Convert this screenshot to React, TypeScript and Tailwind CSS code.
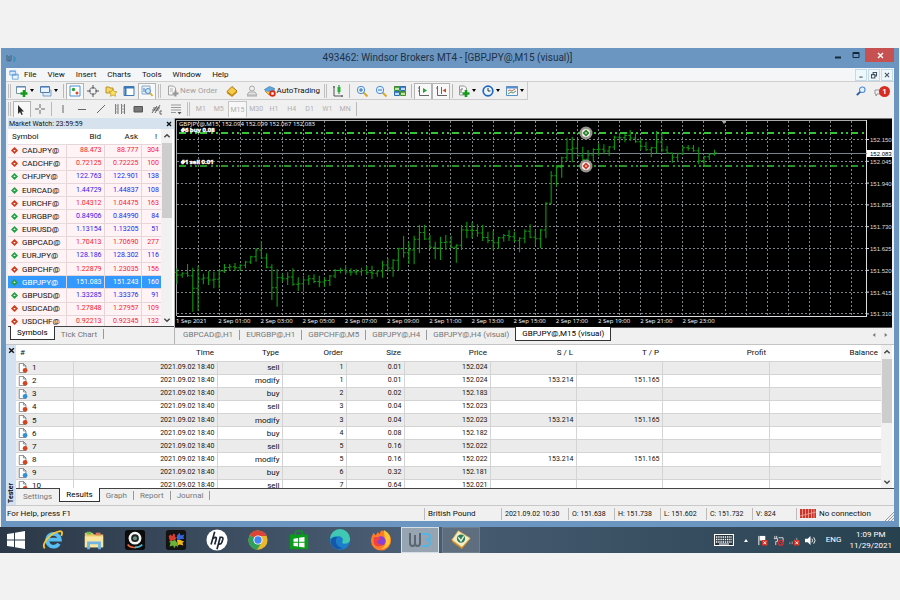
import type { ReactNode } from 'react'

interface Quote {
  symbol: string
  bid: string
  ask: string
  spread: number
  up: boolean
}

interface Order {
  id: number
  type: 'sell' | 'buy' | 'modify'
  order: number
  size: string
  price: string
  sl?: string
  tp?: string
}

const QUOTES: Quote[] = [
  { symbol: 'CADJPY@', bid: '88.473', ask: '88.777', spread: 304, up: false },
  { symbol: 'CADCHF@', bid: '0.72125', ask: '0.72225', spread: 100, up: false },
  { symbol: 'CHFJPY@', bid: '122.763', ask: '122.901', spread: 138, up: true },
  { symbol: 'EURCAD@', bid: '1.44729', ask: '1.44837', spread: 108, up: true },
  { symbol: 'EURCHF@', bid: '1.04312', ask: '1.04475', spread: 163, up: false },
  { symbol: 'EURGBP@', bid: '0.84906', ask: '0.84990', spread: 84, up: true },
  { symbol: 'EURUSD@', bid: '1.13154', ask: '1.13205', spread: 51, up: true },
  { symbol: 'GBPCAD@', bid: '1.70413', ask: '1.70690', spread: 277, up: false },
  { symbol: 'EURJPY@', bid: '128.186', ask: '128.302', spread: 116, up: true },
  { symbol: 'GBPCHF@', bid: '1.22879', ask: '1.23035', spread: 156, up: false },
  { symbol: 'GBPJPY@', bid: '151.083', ask: '151.243', spread: 160, up: true },
  { symbol: 'GBPUSD@', bid: '1.33285', ask: '1.33376', spread: 91, up: true },
  { symbol: 'USDCAD@', bid: '1.27848', ask: '1.27957', spread: 109, up: false },
  { symbol: 'USDCHF@', bid: '0.92213', ask: '0.92345', spread: 132, up: false },
]

const ORDERS: Order[] = [
  { id: 1, type: 'sell', order: 1, size: '0.01', price: '152.024' },
  { id: 2, type: 'modify', order: 1, size: '0.01', price: '152.024', sl: '153.214', tp: '151.165' },
  { id: 3, type: 'buy', order: 2, size: '0.02', price: '152.183' },
  { id: 4, type: 'sell', order: 3, size: '0.04', price: '152.023' },
  { id: 5, type: 'modify', order: 3, size: '0.04', price: '152.023', sl: '153.214', tp: '151.165' },
  { id: 6, type: 'buy', order: 4, size: '0.08', price: '152.182' },
  { id: 7, type: 'sell', order: 5, size: '0.16', price: '152.022' },
  { id: 8, type: 'modify', order: 5, size: '0.16', price: '152.022', sl: '153.214', tp: '151.165' },
  { id: 9, type: 'buy', order: 6, size: '0.32', price: '152.181' },
  { id: 10, type: 'sell', order: 7, size: '0.64', price: '152.021' },
]

// high / low of every bar, three units to a pixel
const BARS: [number, number][] = [
  [460, 507], [472, 488], [447, 485], [458, 590], [452, 587], [476, 508], [468, 510], [470, 520],
  [465, 520], [447, 474], [447, 468], [444, 467], [448, 468], [438, 460], [422, 447], [400, 440],
  [378, 432], [415, 460], [448, 555], [462, 575], [476, 500], [472, 510], [460, 512], [487, 528],
  [482, 530], [480, 510], [478, 505], [482, 517], [487, 515], [480, 513], [462, 490], [458, 475],
  [450, 480], [460, 482], [462, 480], [458, 482], [453, 480], [452, 492], [465, 485], [437, 488],
  [430, 470], [433, 485], [398, 465], [363, 428], [380, 447], [362, 448], [330, 415], [330, 375],
  [360, 400], [380, 433], [365, 435], [360, 405], [362, 400], [388, 443], [330, 405], [320, 370],
  [322, 370], [328, 365], [330, 378], [350, 385], [348, 405], [365, 402], [357, 380], [345, 378],
  [350, 380], [367, 412], [343, 385], [328, 370], [345, 390], [342, 400], [262, 370], [168, 268],
  [150, 215], [125, 188], [68, 138], [66, 142], [75, 125], [95, 150], [105, 160], [100, 140],
  [85, 122], [88, 118], [93, 123], [62, 105], [55, 78], [55, 82], [45, 78], [55, 83],
  [72, 105], [80, 107], [95, 127], [48, 115], [50, 112], [93, 117], [113, 143], [113, 140],
  [92, 120], [90, 107], [90, 110], [97, 148], [122, 152], [115, 135], [104, 122],
]

const PRICES = ['152.150', '152.045', '151.940', '151.835', '151.730', '151.625', '151.520', '151.415', '151.310']
const TIMES = [
  '1 Sep 2021', '2 Sep 01:00', '2 Sep 03:00', '2 Sep 05:00', '2 Sep 07:00', '2 Sep 09:00', '2 Sep 11:00',
  '2 Sep 13:00', '2 Sep 15:00', '2 Sep 17:00', '2 Sep 19:00', '2 Sep 21:00', '2 Sep 23:00',
]

const clamp = (v: number, lo: number, hi: number) => Math.min(hi, Math.max(lo, v))

function barsPath() {
  let d = ''
  let open = BARS[0][0] + 12
  BARS.forEach(([high, low], i) => {
    const next = BARS[i + 1] ?? [high, low]
    const close = clamp((next[0] + next[1]) / 2, high + 3, low - 3)
    const x = 2 + i * 5.27
    const y = (v: number) => (v / 3 - 3).toFixed(1)
    d += `M${x} ${y(high)}V${y(low)}`
    d += `M${x - 2} ${y(clamp(open, high, low))}h2M${x} ${y(close)}h2`
    open = close
  })
  return d
}

function PriceChart() {
  return (
    <svg
      className="block h-[209px] w-full bg-black"
      viewBox="0 0 719 209"
      preserveAspectRatio="xMinYMin slice"
      role="img"
      aria-label="GBPJPY@ M15 bar chart"
    >
      <g stroke="#7f878c" strokeWidth="1" strokeDasharray="2 2" shapeRendering="crispEdges">
        {Array.from({ length: 32 }, (_, i) => (
          <line key={i} x1={23 + i * 21.08} x2={23 + i * 21.08} y1="3" y2="198" />
        ))}
        {PRICES.map((p, i) => (
          <line key={p} x1="2" x2="692" y1={21.5 + i * 21.8} y2={21.5 + i * 21.8} />
        ))}
      </g>
      <path d="M0 .5H719" stroke="#777" />
      <path d="M2 2.5H692M1.5 2V198" stroke="#aaa" fill="none" />
      <path d="M691.5 2V199M2 198.5H692" stroke="#ddd" />
      <path d="M2 35.5H692" stroke="#72848c" />
      <path d={barsPath()} stroke="#0c9a0c" strokeWidth="1.1" fill="none" />
      <g stroke="#35c435" strokeDasharray="7 4 2 3 2 3">
        <line x1="4" x2="689" y1="15" y2="15" strokeWidth="2" />
        <line x1="4" x2="689" y1="48" y2="48" strokeWidth="1.5" />
      </g>
      <path d="M546 2h6l-3 4z" fill="#aaa" />
      {[15, 48].map((cy) => (
        <g key={cy}>
          <circle cx="411" cy={cy} r="5.3" fill="#f2f0ea" stroke="#96948c" strokeWidth="2.4" />
          <path d={`M411 ${cy - 3.500}l3.500 3.500-3.500 3.500-3.500-3.500z`} fill={cy === 15 ? '#27852b' : '#d2362b'} />
          <path d={`M411 ${cy - 1}l1 1-1 1-1-1z`} fill="#fff" />
        </g>
      ))}
      <g fill="#fff" fontFamily='"Open Sans", sans-serif' fontSize="6">
        <text x="4" y="8">GBPJPY@,M15&nbsp; 152.094 152.099 152.067 152.083</text>
        <g fontWeight="700" stroke="#fff" strokeWidth=".4">
          <text x="6" y="14">#6 buy 0.08</text>
          <text x="6" y="46">#1 sell 0.01</text>
        </g>
        {TIMES.map((t, i) => (
          <text key={t} x={1 + i * 42.2} y="205">{t}</text>
        ))}
      </g>
      <g fill="#ddd" fontFamily='"Liberation Sans", sans-serif' fontSize="6">
        {PRICES.map((p, i) => (
          <g key={p}>
            <path d={`M692 ${21.5 + i * 21.8}h2`} stroke="#ddd" />
            <text x="695" y={24 + i * 21.8}>{p}</text>
          </g>
        ))}
        <rect x="692" y="32" width="26" height="7" fill="#fff" />
        <text x="695" y="38" fill="#000">152.083</text>
      </g>
    </svg>
  )
}

function Icon({ children, size = 'size-3' }: { children: ReactNode; size?: string }) {
  return (
    <svg viewBox="0 0 12 12" className={`${size} shrink-0`} fill="none" aria-hidden="true">
      {children}
    </svg>
  )
}

function Plus() {
  return <path d="M8 5v7M4.5 8.5h7" stroke="#149b1c" strokeWidth="2.6" />
}

function Caret() {
  return (
    <svg viewBox="0 0 4 3" className="h-[3px] w-1 shrink-0 fill-black" aria-hidden="true">
      <path d="M0 0h4L2 3z" />
    </svg>
  )
}

interface ToolProps {
  label: string
  pressed?: boolean
  menu?: boolean
  width?: string
  children: ReactNode
}

function Tool({ label, pressed, menu, width = 'w-[18px]', children }: ToolProps) {
  return (
    <button
      type="button"
      aria-label={label}
      className={`flex h-4 items-center justify-center gap-[2px] ${width} ${
        pressed ? 'border border-b-0 border-[#b5b5b5] bg-[#f8f8f8]' : ''
      }`}
    >
      {children}
      {menu && <Caret />}
    </button>
  )
}

function Sep() {
  return <span className="mx-[2px] h-[14px] w-px shrink-0 bg-[#b8b8b8]" />
}

function Grip() {
  return <span className="mx-[2px] h-[14px] w-[3px] shrink-0 border-x border-[#c0c0c0]" />
}

function TitleBar() {
  return (
    <header className="flex h-5 items-start bg-[#6b96c1]">
      <div className="flex h-5 w-[60px] items-center">
        <Icon>
          <path d="M1 3v5q0 1 1 1t1-1V4M3 8q0 1 1 1t1-1V3" stroke="#44607c" />
          <path d="M7 5h2v4H7M7 7h2" stroke="#2f8fb5" />
        </Icon>
      </div>
      <h1 className="flex-1 text-center text-[10px] leading-5 text-[#1d3147]">
        493462: Windsor Brokers MT4 - [GBPJPY@,M15 (visual)]
      </h1>
      <div className="flex">
        <button type="button" aria-label="Minimize" className="flex h-[14px] w-[18px] items-center justify-center">
          <Icon><path d="M3 8.5h6" stroke="#16283c" strokeWidth="2" /></Icon>
        </button>
        <button type="button" aria-label="Maximize" className="flex h-[14px] w-[18px] items-center justify-center">
          <Icon><path d="M3 3.5h6v5H3zM3 4.5h6" stroke="#16283c" /></Icon>
        </button>
        <button type="button" aria-label="Close" className="flex h-[14px] w-[29px] items-center justify-center bg-[#c75050]">
          <Icon><path d="M4 4l5 5M9 4l-5 5" stroke="#fff" strokeWidth="1.4" /></Icon>
        </button>
      </div>
    </header>
  )
}

function MenuBar() {
  return (
    <nav className="flex h-[14px] items-center border-b border-[#cfcfcf] bg-[#f5f6f7] pr-px text-[8px] leading-3">
      <div className="w-[18px] pl-[3px]">
        <Icon size="size-[10px]">
          <path d="M1 1h7v5H1zM4 5h7v6H4z" fill="#eaf5ff" stroke="#5b9be0" />
          <path d="M1 2h7M4 6h7" stroke="#5b9be0" />
        </Icon>
      </div>
      <div className="flex flex-1 gap-[11px]">
        {['File', 'View', 'Insert', 'Charts', 'Tools', 'Window', 'Help'].map((m) => (
          <button key={m} type="button">{m}</button>
        ))}
      </div>
      <div className="flex gap-px">
        {[
          ['Minimize chart', 'M4 8.5h4'],
          ['Restore chart', 'M3 5.5h4v4H3zM5 5V3h4v4H7'],
          ['Close chart', 'M3.500 3.500l5 5M8.500 3.500l-5 5'],
        ].map(([label, d]) => (
          <button
            key={label}
            type="button"
            aria-label={label}
            className="flex h-3 w-3 items-center justify-center border border-[#c3dbe8] bg-[#eef7fb]"
          >
            <Icon size="size-[10px]"><path d={d} stroke="#425261" strokeWidth="1.3" /></Icon>
          </button>
        ))}
      </div>
    </nav>
  )
}

function StandardToolbar() {
  return (
    <div className="flex h-[18px] items-center justify-between pr-1">
      <div className="flex h-[18px] items-center border-r border-b border-[#cacaca]">
        <Grip />
        <Tool label="New chart" menu width="w-[24px]">
          <Icon>
            <path d="M.5 1.500h9v7h-9z" fill="#fff" stroke="#7793b0" />
            <path d="M.5 2h9" stroke="#4f7caf" />
            <Plus />
          </Icon>
        </Tool>
        <Tool label="Profiles" menu width="w-[24px]">
          <Icon>
            <path d="M3 5h8v6H3z" fill="#dcecff" stroke="#7f9fc4" />
            <path d="M.5 1.500h9v6h-9z" fill="#eaf3ff" stroke="#4f7caf" />
            <path d="M1 2.500h8" stroke="#88b0dd" />
          </Icon>
        </Tool>
        <Sep />
        <Tool label="Market Watch" pressed>
          <Icon>
            <path d="M1 1h10v10H1z" fill="#fff" stroke="#4d8fd2" />
            <circle cx="4.500" cy="4.500" r="1.700" fill="#2aa52e" />
            <circle cx="8" cy="8" r="1.500" fill="#d84a32" />
          </Icon>
        </Tool>
        <Tool label="Data Window">
          <Icon>
            <circle cx="6" cy="6" r="3.500" stroke="#777" />
            <path d="M6 0v4M6 8v4M0 6h4M8 6h4" stroke="#555" />
          </Icon>
        </Tool>
        <Tool label="Navigator">
          <Icon>
            <path d="M1 2h3l1 1h3v5H1z" fill="#f4d463" stroke="#bd9327" />
            <path d="M8 4l1.300 2.500 2.700.3-2 1.800.5 2.700L8 10l-2.500 1.300.5-2.700-2-1.800 2.700-.3z" fill="#fbe45c" stroke="#bd9327" strokeWidth=".7" />
          </Icon>
        </Tool>
        <Tool label="Terminal">
          <Icon>
            <path d="M1 1.500h10v9H1z" fill="#fff" stroke="#3d78b5" />
            <path d="M2.500 2v8M1 2.500h10" stroke="#3d78b5" strokeWidth="2" />
          </Icon>
        </Tool>
        <Tool label="Strategy Tester" pressed>
          <Icon>
            <path d="M1 1h8v8H1z" fill="#e9f2fb" stroke="#8aa7c6" />
            <path d="M3 7V3M5 8V4" stroke="#467cb8" />
            <circle cx="7" cy="6" r="2.500" fill="#cfe6fb" stroke="#568dc9" />
            <path d="M9 8l2.500 3" stroke="#d8a62a" strokeWidth="1.600" />
          </Icon>
        </Tool>
        <Grip />
        <button type="button" className="flex h-4 items-center gap-px px-1 text-[8px] text-[#a0a0a0]">
          <Icon>
            <path d="M1.500 1h5l2 2v7h-7z" fill="#f4f4f4" stroke="#a2a2a2" />
            <path d="M3 4h3M3 6h3" stroke="#b5b5b5" />
            <path d="M8.500 5.500v6M5.500 8.500h6" stroke="#959595" strokeWidth="2" />
          </Icon>
          New Order
        </button>
        <Tool label="MetaEditor" width="w-[20px]">
          <Icon>
            <path d="M1 6.500l5-5 5 4.500-5 4.500z" fill="#f7cb45" stroke="#a97411" />
            <path d="M1 7.500l5 3.500 5-4.500" stroke="#c68c15" strokeWidth="1.500" />
          </Icon>
        </Tool>
        <Tool label="Options" width="w-[20px]">
          <Icon>
            <circle cx="6" cy="3.500" r="2.500" stroke="#a8a8a8" fill="#eee" />
            <path d="M3 7l-2 3h10L9 7zM1 11h10" stroke="#a8a8a8" fill="#e6e6e6" />
          </Icon>
        </Tool>
        <button type="button" className="flex h-4 items-center gap-px px-[2px] text-[8px]">
          <Icon>
            <path d="M.500 4.500l5-3 5 2-1 4-5 2z" fill="#5fa7dd" stroke="#3b78b0" strokeWidth=".7" />
            <path d="M1 6l4 4 4-2" fill="#f1c84a" stroke="#c89222" />
            <circle cx="8.500" cy="8.500" r="3.200" fill="#d52c1e" />
            <path d="M7.300 7.300h2.400v2.400H7.300z" fill="#fff" />
          </Icon>
          AutoTrading
        </button>
        <Grip />
        <Tool label="Candlesticks">
          <Icon>
            <path d="M2 1v10h9M1 2h2M10 10v2" stroke="#555" />
            <path d="M7 0v9" stroke="#1d7d26" />
            <path d="M5.500 2h3v5h-3z" fill="#27ae35" />
          </Icon>
        </Tool>
        <Sep />
        <Tool label="Zoom in" width="w-[19px]">
          <Icon>
            <path d="M7.500 7.500l4 4" stroke="#d9a92c" strokeWidth="2" />
            <circle cx="5" cy="5" r="3.700" fill="#e2f1ff" stroke="#4c8fd4" />
            <path d="M3 5h4M5 3v4" stroke="#2c6fb5" />
          </Icon>
        </Tool>
        <Tool label="Zoom out" width="w-[19px]">
          <Icon>
            <path d="M7.500 7.500l4 4" stroke="#d9a92c" strokeWidth="2" />
            <circle cx="5" cy="5" r="3.700" fill="#e2f1ff" stroke="#4c8fd4" />
            <path d="M3 5h4" stroke="#2c6fb5" />
          </Icon>
        </Tool>
        <Tool label="Tile windows" width="w-[19px]">
          <Icon>
            <path d="M.5 1.500h5v4h-5zM6.500 6.500h5v4h-5z" fill="#bfe6a3" stroke="#3c8e2c" />
            <path d="M6.500 1.500h5v4h-5zM.5 6.500h5v4h-5z" fill="#bcdcff" stroke="#2d6db8" />
            <path d="M0 2h6M6 7h6" stroke="#3c8e2c" strokeWidth="1.500" />
            <path d="M6 2h6M0 7h6" stroke="#2d6db8" strokeWidth="1.500" />
          </Icon>
        </Tool>
        <Sep />
        <Tool label="Auto scroll" pressed>
          <Icon>
            <path d="M2.500 1v9.500H12M1 3h1M1 6h1" stroke="#666" />
            <path d="M6 3l4 2.500L6 8z" fill="#24a231" />
          </Icon>
        </Tool>
        <Tool label="Chart shift" pressed>
          <Icon>
            <path d="M2.500 1v9.500H12M1 3h1M6.500 2v7" stroke="#666" />
            <path d="M11 3.500L7.500 5.500 11 7.500z" fill="#c84a22" />
          </Icon>
        </Tool>
        <Sep />
        <Tool label="Indicators" menu width="w-[24px]">
          <Icon>
            <path d="M1.500 1h5l2 2v7h-7z" fill="#f6f6f6" stroke="#999" />
            <path d="M3 8V4h2" stroke="#777" />
            <Plus />
          </Icon>
        </Tool>
        <Tool label="Periods" menu width="w-[24px]">
          <Icon>
            <circle cx="6" cy="6" r="4.800" fill="#eaf5ff" stroke="#1e68bd" strokeWidth="1.700" />
            <path d="M6 3v3h2.500" stroke="#333" />
          </Icon>
        </Tool>
        <Tool label="Templates" menu width="w-[24px]">
          <Icon>
            <path d="M.5 1.500h11v9H.5z" fill="#f2f8ff" stroke="#5b8fc7" />
            <path d="M.5 2.500h11" stroke="#5b8fc7" strokeWidth="2" />
            <path d="M2 6l2-1 2 1 3-2" stroke="#c86b55" />
            <path d="M2 9l3-2 2 1 3-2" stroke="#4f9a57" />
          </Icon>
        </Tool>
      </div>
      <div className="flex items-center gap-2">
        <button type="button" aria-label="Search">
          <Icon size="size-[10px]">
            <circle cx="7.500" cy="4.500" r="3.300" fill="#e7f1fb" stroke="#4c8cd0" strokeWidth="1.300" />
            <path d="M5 7l-4 4" stroke="#2a56a8" strokeWidth="2.200" />
          </Icon>
        </button>
        <button type="button" aria-label="Notifications, 1 new" className="flex items-center">
          <svg viewBox="0 0 6 8" className="mt-1 -mr-px h-2 w-[6px]" fill="none" aria-hidden="true">
            <path d="M1 1h5v4H3L2 7V5H1z" fill="#eee" stroke="#999" />
          </svg>
          <span className="size-[11px] rounded-full bg-[#d82c1f] text-center text-[8px] font-bold leading-[11px] text-white">1</span>
        </button>
      </div>
    </div>
  )
}

function DrawingToolbar() {
  const frames = ['M1', 'M5', 'M15', 'M30', 'H1', 'H4', 'D1', 'W1', 'MN']
  return (
    <div className="flex h-[18px] items-center">
      <Grip />
      <Tool label="Cursor" pressed>
        <Icon><path d="M2 1v9l2-2 1.500 3 1.300-.6L5.400 7.500H8z" fill="#2d2d2d" /></Icon>
      </Tool>
      <Tool label="Crosshair">
        <Icon><path d="M6 1v4M6 7v4M1 6h4M7 6h4" stroke="#666" /></Icon>
      </Tool>
      <Sep />
      <div className="flex w-[131px] *:flex-1">
        <Tool label="Vertical line"><Icon><path d="M6 2v8" stroke="#666" /></Icon></Tool>
        <Tool label="Horizontal line"><Icon><path d="M2 6.500h8" stroke="#666" /></Icon></Tool>
        <Tool label="Trendline"><Icon><path d="M2 10l8-8" stroke="#666" /></Icon></Tool>
        <Tool label="Cycle lines">
          <Icon><path d="M1.500 1v10M4 1v10M7.500 1v10M10.500 1v10" stroke="#777" /><path d="M1 3h3M1 6h3M1 9h3M7 3h3M7 6h3M7 9h3" stroke="#999" /></Icon>
        </Tool>
        <Tool label="Rectangle"><Icon><path d="M2 3.500h8.500v5.500H2z" fill="#777" stroke="#555" /></Icon></Tool>
        <Tool label="Channel">
          <Icon><path d="M1 10l5-7M4 10l5-8M2 5h7M1 7h7M9 8h2M9 11h2M9 8v3" stroke="#555" strokeWidth=".9" /></Icon>
        </Tool>
        <Tool label="Fibonacci">
          <Icon><path d="M1 2h10M1 4.500h10M1 7h10M1 9.500h5" stroke="#999" /><path d="M7.500 9h4l-2 2.500z" fill="#555" /></Icon>
        </Tool>
      </div>
      <Grip />
      <div className="flex w-[162px]">
        {frames.map((f) => (
          <button
            key={f}
            type="button"
            className={`h-4 flex-1 text-center text-[7px] leading-4 text-[#b0b0b0] ${
              f === 'M15' ? 'border border-b-0 border-[#c4c4c4] bg-[#f7f7f7]' : ''
            }`}
          >
            {f}
          </button>
        ))}
      </div>
      <Sep />
    </div>
  )
}

function Scrollbar({ thumb }: { thumb: string }) {
  return (
    <div className="flex w-[11px] shrink-0 flex-col items-center bg-[#f1f1f1]">
      <button type="button" aria-label="Scroll up" className="flex h-[14px] items-center">
        <Icon size="size-[8px]"><path d="M2 8l4-4 4 4" stroke="#444" strokeWidth="2" /></Icon>
      </button>
      <span className={`w-[10px] bg-[#cdcdcd] ${thumb}`} />
      <button type="button" aria-label="Scroll down" className="mt-auto flex h-3 items-center">
        <Icon size="size-[8px]"><path d="M2 4l4 4 4-4" stroke="#444" strokeWidth="2" /></Icon>
      </button>
    </div>
  )
}

function MarketWatch() {
  return (
    <section className="flex w-[167px] shrink-0 flex-col border-r border-[#b5b5b5]">
      <div className="flex h-[11px] items-center justify-between bg-[#d6e2ee] px-px leading-[10px]">
        <h2 className="text-[7px]">Market Watch: 23:59:59</h2>
        <button type="button" aria-label="Close Market Watch">
          <Icon size="size-[8px]"><path d="M3 3l6 6M9 3L3 9" stroke="#111" strokeWidth="2" /></Icon>
        </button>
      </div>
      <div className="flex h-[198px] overflow-hidden border-b border-[#444] bg-white">
        <div className="flex-1 overflow-hidden">
          <table className="h-[200px] w-full table-fixed border-collapse text-right text-[8px] leading-[11px]">
            <colgroup>
              <col />
              <col className="w-[38px]" />
              <col className="w-[37px]" />
              <col className="w-[20px]" />
            </colgroup>
            <thead>
              <tr className="h-[15px]">
                <th className="pl-1 text-left font-normal">Symbol</th>
                <th className="pr-[3px] font-normal">Bid</th>
                <th className="pr-[3px] font-normal">Ask</th>
                <th className="pr-1 font-normal">!</th>
              </tr>
            </thead>
            <tbody>
              {QUOTES.map((q) => {
                const active = q.symbol === 'GBPJPY@'
                const tone = active ? 'text-white' : q.up ? 'text-[#2a1df0]' : 'text-[#f5222d]'
                return (
                  <tr key={q.symbol} className={active ? 'bg-[#3399ff] text-white' : 'bg-[#fff3f5]'}>
                    <td className="border-y border-[#e6dcde] py-0">
                      <span className="flex items-center gap-1 pl-[3px]">
                        <Icon size="size-[7px]">
                          <path d="M6 0l6 6-6 6-6-6z" fill={q.up ? '#1fa344' : '#cf3b1b'} />
                          <path d={q.up ? 'M4 7l2-3 2 3z' : 'M4 5l2 3 2-3z'} fill="#fff" />
                        </Icon>
                        {q.symbol}
                      </span>
                    </td>
                    {[q.bid, q.ask, q.spread].map((v, i) => (
                      <td key={i} className={`border border-r-0 border-[#e6d6da] py-0 pr-[2px] text-[7px] ${tone}`}>{v}</td>
                    ))}
                  </tr>
                )
              })}
            </tbody>
          </table>
        </div>
        <Scrollbar thumb="h-[75px]" />
        <span className="w-[2px]" />
      </div>
      <div className="flex h-[14px] pl-[2px] text-[8px] leading-3 text-[#777]">
        <button type="button" className="-mt-px mb-px border border-t-0 border-[#333] bg-white px-[6px] text-black">Symbols</button>
        <button type="button" className="my-[2px] border-r border-[#999] px-[6px] leading-[9px]">Tick Chart</button>
      </div>
    </section>
  )
}

function ChartArea() {
  return (
    <section className="min-w-0 flex-1 pr-px">
      <PriceChart />
      <div className="flex h-[17px] items-start border-t border-[#555] pl-[2px] text-[8px] leading-3 text-[#777]">
        {['GBPCAD@,H1', 'EURGBP@,H1', 'GBPCHF@,M5', 'GBPJPY@,H4'].map((t) => (
          <button key={t} type="button" className="my-[2px] border-r border-[#999] px-[6px] leading-[10px]">{t}</button>
        ))}
        <button type="button" className="my-[2px] px-[6px] leading-[10px]">GBPJPY@,H4 (visual)</button>
        <button type="button" className="-mt-px border border-t-0 border-[#333] bg-white px-[6px] pt-px text-black">
          GBPJPY@,M15 (visual)
        </button>
        <div className="ml-auto flex gap-1 pt-[3px] pr-[2px]">
          <button type="button" aria-label="Previous tab"><Icon size="size-[8px]"><path d="M8 3v6L4 6z" fill="#777" /></Icon></button>
          <button type="button" aria-label="Next tab"><Icon size="size-[8px]"><path d="M4 3v6l4-3z" fill="#777" /></Icon></button>
        </div>
      </div>
    </section>
  )
}

const CELL = 'border-r border-b border-[#d4d4d4] py-0 pr-[2px]'

function Tester() {
  return (
    <section className="flex border-t border-[#c4c4c4]">
      <div className="flex w-[10px] shrink-0 flex-col items-center justify-between bg-[#d3e1f1] py-[2px]">
        <button type="button" aria-label="Close Tester">
          <Icon size="size-[7px]"><path d="M2 2l8 8M10 2l-8 8" stroke="#111" strokeWidth="2.400" /></Icon>
        </button>
        <h2 className="rotate-180 text-[7px] font-bold leading-[9px] [writing-mode:vertical-rl]">Tester</h2>
      </div>
      <div className="min-w-0 flex-1">
        <div className="flex h-[144px] overflow-hidden border-b border-[#444] bg-white">
          <div className="min-w-0 flex-1">
            <table className="h-[148px] w-full table-fixed border-collapse text-right text-[7px] leading-[11px]">
              <colgroup>
                <col className="w-[57px]" />
                <col className="w-[144px]" />
                <col className="w-[65px]" />
                <col className="w-[64px]" />
                <col className="w-[58px]" />
                <col className="w-[86px]" />
                <col className="w-[86px]" />
                <col className="w-[86px]" />
                <col className="w-[107px]" />
                <col />
              </colgroup>
              <thead>
                <tr className="h-4 text-[8px]">
                  <th className="border-b border-[#d4d4d4] pl-1 text-left font-normal">#</th>
                  {['Time', 'Type', 'Order', 'Size', 'Price', 'S / L', 'T / P', 'Profit', 'Balance'].map((h) => (
                    <th key={h} className="border-b border-[#d4d4d4] pr-[3px] font-normal">{h}</th>
                  ))}
                </tr>
              </thead>
              <tbody>
                {ORDERS.map((o) => (
                  <tr key={o.id} className="odd:bg-[#ebebeb]">
                    <td className={CELL}>
                      <span className="flex items-center gap-1 pl-[2px] text-[8px]">
                        <Icon size="size-[10px]">
                          <path d="M1.500 .500h5l3 3v8h-8z" fill="#fff" stroke="#777" />
                          <path d="M6.500 .500v3h3" stroke="#777" />
                          <circle cx="8.500" cy="8.800" r="2.800" fill={o.type === 'buy' ? '#2f8fd8' : '#d5431e'} />
                        </Icon>
                        {o.id}
                      </span>
                    </td>
                    <td className={CELL}>2021.09.02 18:40</td>
                    <td className={`${CELL} text-[8px]`}>{o.type}</td>
                    <td className={CELL}>{o.order}</td>
                    <td className={CELL}>{o.size}</td>
                    <td className={CELL}>{o.price}</td>
                    <td className={CELL}>{o.sl}</td>
                    <td className={CELL}>{o.tp}</td>
                    <td className={CELL} />
                    <td className="border-b border-[#d4d4d4]" />
                  </tr>
                ))}
              </tbody>
            </table>
          </div>
          <Scrollbar thumb="h-16" />
          <span className="w-[2px]" />
        </div>
        <div className="flex h-[16px] text-[8px] leading-3 text-[#777]">
          <button type="button" className="px-[7px]">Settings</button>
          <button type="button" className="-mt-px mb-[3px] border border-t-0 border-[#333] bg-white px-[6px] text-black">Results</button>
          {['Graph', 'Report', 'Journal'].map((t) => (
            <button key={t} type="button" className="mt-[2px] mb-[5px] border-r border-[#999] px-[6px] leading-[9px]">{t}</button>
          ))}
        </div>
      </div>
    </section>
  )
}

const FIELD = 'border-l border-[#bbb] pl-[3px]'

function StatusBar() {
  return (
    <footer className="flex h-4 items-center border-t border-[#c8c8c8] text-[8px] leading-3">
      <span className="flex-1 pl-px">For Help, press F1</span>
      <span className={`${FIELD} w-[77px]`}>British Pound</span>
      <span className={`${FIELD} w-[67px] text-[7px]`}>2021.09.02 10:30</span>
      <span className={`${FIELD} w-[46px] text-[7px]`}>O: 151.638</span>
      <span className={`${FIELD} w-[46px] text-[7px]`}>H: 151.738</span>
      <span className={`${FIELD} w-[46px] text-[7px]`}>L: 151.602</span>
      <span className={`${FIELD} w-[46px] text-[7px]`}>C: 151.732</span>
      <span className={`${FIELD} w-[44px] text-[7px]`}>V: 824</span>
      <span className={`${FIELD} flex w-[88px] items-center gap-[3px]`}>
        <svg viewBox="0 0 16 9" className="h-[9px] w-4" aria-hidden="true">
          <path d="M0 0h16v9H0z" fill="#c9352b" />
          <path d="M2.500 0v9M5.500 0v9M8.500 0v9M11.500 0v9M14 0v9M0 7l16-4" stroke="#f3b5ae" strokeWidth=".7" />
        </svg>
        No connection
      </span>
      <svg viewBox="0 0 10 10" className="size-[10px] self-end" stroke="#999" aria-hidden="true">
        <path d="M1 10l9-9M4 10l6-6M7 10l3-3" />
      </svg>
    </footer>
  )
}

function TaskIcon({ label, children }: { label: string; children: ReactNode }) {
  return (
    <button type="button" aria-label={label} className="flex w-[41px] items-center justify-center">
      <svg viewBox="0 0 24 24" className="size-[22px]" fill="none" aria-hidden="true">{children}</svg>
    </button>
  )
}

function Taskbar() {
  return (
    <div className="flex h-[26px] items-stretch bg-linear-to-r from-[#2b3847] via-[#4a5e75] via-45% to-[#27414f] text-white">
      <button type="button" aria-label="Start" className="flex w-8 items-center justify-center">
        <svg viewBox="0 0 18 18" className="size-[18px] fill-white" aria-hidden="true">
          <path d="M0 3l7-1v6.500H0zM8 1.800L18 0v8.500H8zM0 9.500h7V16l-7-1zM8 9.500h10V18L8 16.200z" />
        </svg>
      </button>
      <TaskIcon label="Internet Explorer">
        <path d="M18.500 16a7 7 0 1 1 1-4.500H7" stroke="#58bdf0" strokeWidth="4" />
        <path d="M3 21C-1 17 9 4 19 2.500c4-.5 3 3 2 5" stroke="#f3c736" strokeWidth="2" />
      </TaskIcon>
      <TaskIcon label="File Explorer">
        <path d="M2 4h8l2 2h10v14H2z" fill="#e9c766" />
        <path d="M4 3h5v3H4z" fill="#6bbf59" /><path d="M14 4h5v3h-5z" fill="#e07a5a" />
        <path d="M2 8h20v12H2z" fill="#f8e6a0" />
        <path d="M6 22v-7h12v7" stroke="#6fb4e3" strokeWidth="3" />
      </TaskIcon>
      <TaskIcon label="Camera">
        <rect x="1" y="1" width="22" height="22" rx="3" fill="#0c0c0c" />
        <circle cx="12" cy="10" r="7" fill="#f4f4f4" />
        <circle cx="12" cy="10" r="4.200" fill="#222" />
        <circle cx="12" cy="10" r="2.200" fill="#5f927c" />
        <path d="M4 17q3 4 9 3" stroke="#e3643a" strokeWidth="1.800" />
        <path d="M12 20q5 0 8-3" stroke="#4cb6d6" strokeWidth="1.800" />
      </TaskIcon>
      <TaskIcon label="Paint studio">
        <rect x="1" y="1" width="22" height="22" rx="3" fill="#131313" />
        <path d="M4 8l2-2 2 2 1-3 2 1v3l2 0-2 3-3 0-1 3-2-3z" fill="#d83b2c" />
        <path d="M13 7l3-3 1 3 4-1-1 3 1 2-4 0-3 2-1-3z" fill="#3366d6" />
        <path d="M13 12l4 0 4 2-2 1 1 3-4-1-2 1z" fill="#efb520" />
        <path d="M11 12l3 4 0 4-2-2-2 3-1-3-4 1 1-4-2-1z" fill="#6bb23a" />
      </TaskIcon>
      <TaskIcon label="HP">
        <circle cx="12" cy="12" r="11.500" fill="#fff" />
        <path d="M9.500 3L5.500 17M7.800 10q4-2 3.500.7L9.500 17M15.500 9L12 22M14.500 9h2.500q2 0 1.300 2.500l-1 3q-.6 2-2.300 2h-1.500" stroke="#1c2430" strokeWidth="1.800" />
      </TaskIcon>
      <TaskIcon label="Chrome">
        <circle cx="12" cy="12" r="10.500" fill="#e8b92e" />
        <path d="M12 12L2.900 6.800A10.500 10.500 0 0 1 21.500 7.500H12z" fill="#db4437" />
        <path d="M12 12L2.900 6.800A10.500 10.500 0 0 0 11 22.500l5-8z" fill="#2fa05a" />
        <circle cx="12" cy="12" r="5" fill="#fff" />
        <circle cx="12" cy="12" r="4" fill="#4285f4" />
      </TaskIcon>
      <TaskIcon label="Store">
        <path d="M8 7V4q0-2 4-2t4 2v3" stroke="#0a9b1b" strokeWidth="1.500" />
        <path d="M2 6h20v16H2z" fill="#0a9b1b" />
        <path d="M6 10.500l5-.7V14H6zM12 9.600l6-.8V14h-6zM6 15h5v4.200L6 18.500zM12 15h6v5.200l-6-.8z" fill="#fff" />
      </TaskIcon>
      <TaskIcon label="Edge">
        <circle cx="12" cy="12" r="11" fill="#1b7ecb" />
        <path d="M1 11A11 11 0 0 1 23 11c0 4-3 5-6 5s-3-2-2-3c1-3-2-5-5-5-5 0-8 2-9 3z" fill="#41c8b4" />
        <path d="M9 9c-3 3-2 10 6 12-7 3-13-2-13-8 1-4 4-5 7-4z" fill="#1558a7" />
      </TaskIcon>
      <TaskIcon label="Firefox">
        <path d="M12 2c6-1 11 4 11 10a11 11 0 0 1-22 1c0-4 2-7 3-9l2 3 3-4 1 3z" fill="#ff7a2a" />
        <path d="M15 1c5 3 8 7 7 13-1 5-6 8-10 8 5-3 7-8 4-13z" fill="#ffc832" />
        <circle cx="12" cy="13" r="5" fill="#8b3fd6" />
        <path d="M4 9q6-1 8 2l-4 2q0 4 6 4-7 5-10-2z" fill="#f0433f" />
      </TaskIcon>
      <button type="button" aria-label="Windsor Brokers MT4" className="flex w-[38px] items-center justify-center border border-[#d5dde5] bg-[#97a5b2]">
        <svg viewBox="0 0 24 18" className="h-[18px] w-6" fill="none" aria-hidden="true">
          <path d="M2 2v10q0 3 2.500 3T7 12V4M7 12q0 3 2.500 3t2.500-3V2" stroke="#5c6670" strokeWidth="2" />
          <path d="M14 3h6q2 0 2 2.500T20 8.500h-3M20 8.500q2 0 2 3t-3 3.500h-5" stroke="#55b4e2" strokeWidth="2" />
        </svg>
      </button>
      <button type="button" aria-label="MetaEditor" className="ml-[3px] flex w-[38px] items-center justify-center border border-[#71808e] bg-[#5e6e7e]">
        <svg viewBox="0 0 24 24" className="size-[22px]" fill="none" aria-hidden="true">
          <path d="M2 14L10 3l12 8-9 11z" fill="#c38a2a" />
          <path d="M2 12L9 2l13 8-9 10z" fill="#f5ecc8" stroke="#d6aa47" />
          <circle cx="12" cy="10.500" r="4.500" fill="#2c7b5d" />
          <path d="M9 9l3 4 3-5" stroke="#e8f4d8" strokeWidth="1.500" />
        </svg>
      </button>
      <div className="ml-auto flex items-center">
        <svg viewBox="0 0 20 12" className="mr-[10px] h-3 w-5" fill="none" aria-hidden="true">
          <path d="M.500 .500h19v11H.500z" fill="#26333f" stroke="#fff" strokeWidth="1.200" />
          <path d="M2 3h16M2 5.500h16M2 8h16" stroke="#fff" strokeWidth="1.500" strokeDasharray="1.400 .8" />
          <path d="M5 10h10" stroke="#fff" />
        </svg>
        <svg viewBox="0 0 4 3" className="mr-[9px] h-[3px] w-1 fill-white" aria-hidden="true"><path d="M0 3h4L2 0z" /></svg>
        <div className="flex gap-[5px]">
          <Icon size="size-[11px]">
            <path d="M2 1v10" stroke="#fff" /><path d="M3 1h6v5H3z" fill="#fff" />
            <path d="M5.500 5.500h6v6h-6z" fill="#d83426" /><path d="M7 7l3 3M10 7l-3 3" stroke="#fff" />
          </Icon>
          <Icon size="size-[11px]">
            <path d="M2 1v3M4 1v3M1 4h4v3H3v4M6 3h5v5" stroke="#ddd" />
            <circle cx="8.500" cy="8.500" r="2.700" stroke="#cf2e37" strokeWidth="1.500" /><path d="M7 7l3 3" stroke="#cf2e37" />
          </Icon>
          <Icon size="size-[11px]">
            <path d="M1 10V8M3.500 10V7M6 10V5M8.500 6V3" stroke="#aaa" />
            <path d="M5.500 5.500h6v6h-6z" fill="#d83426" /><path d="M7 7l3 3M10 7l-3 3" stroke="#fff" />
          </Icon>
          <Icon size="size-[11px]">
            <path d="M0 4h3l3-3v10L3 8H0z" fill="#fff" />
            <path d="M7.500 4q1.500 2 0 4M9.500 2.500q3 3.500 0 7" stroke="#fff" />
          </Icon>
        </div>
        <span className="ml-[10px] text-[8px]">ENG</span>
        <div className="mx-2 text-center text-[8px] leading-[11px]">
          <div>1:09 PM</div>
          <div>11/29/2021</div>
        </div>
      </div>
    </div>
  )
}

export default function App() {
  return (
    <div className="min-h-screen bg-[#f2f2f2] pt-12 font-[Roboto,'Open_Sans',sans-serif] text-[#111]">
      <div className="mx-px border-x-[5px] border-b-[6px] border-[#6b96c1] bg-[#f0f0f0]">
        <TitleBar />
        <MenuBar />
        <StandardToolbar />
        <DrawingToolbar />
        <main className="flex pl-[2px] pr-px">
          <MarketWatch />
          <ChartArea />
        </main>
        <Tester />
        <StatusBar />
      </div>
      <Taskbar />
    </div>
  )
}
